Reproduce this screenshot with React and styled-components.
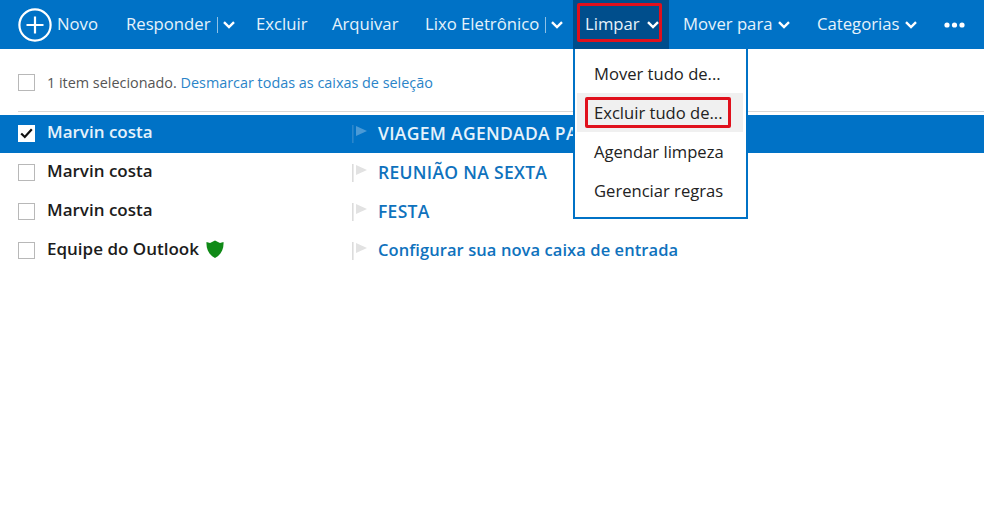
import React from 'react';
import styled, { createGlobalStyle } from 'styled-components';

const blue = '#0072c6';
const font = '"Open Sans", "Noto Sans", sans-serif';

const GlobalStyle = createGlobalStyle`
	html, body {
		margin: 0;
		padding: 0;
		background: #fff;
		overflow: hidden;
	}
	body {
		font-family: ${font};
	}
`

const Page = styled.div`
	width: 984px;
	height: 522px;
	overflow: hidden;
	background: #fff;
`

const Toolbar = styled.div`
	height: 49px;
	padding-left: 18px;
	display: flex;
	align-items: stretch;
	background: ${blue};
	color: #fff;
	font-size: 16.7px;
`

const Command = styled.div`
	position: relative;
	display: flex;
	align-items: center;
	gap: ${p => p.$gap || 0}px;
	width: ${p => p.$width}px;
	flex: none;
	padding-left: ${p => p.$pad || 0}px;
	box-sizing: border-box;
	background: ${p => p.$open ? '#004e8c' : 'transparent'};
	white-space: nowrap;
`

const Label = styled.span`
	color: #e6f2fb;
	margin-top: -2px;
`

const Divider = styled.span`
	width: 1px;
	height: 16px;
	margin: 0 5px 0 6px;
	background: #8fc1e6;
`

const Highlight = styled.div`
	position: absolute;
	left: ${p => p.$left}px;
	top: ${p => p.$top}px;
	width: ${p => p.$width}px;
	height: ${p => p.$height}px;
	box-sizing: border-box;
	border: 3px solid #e0101c;
	border-radius: 2px;
	pointer-events: none;
`

const Menu = styled.div`
	position: absolute;
	left: 0;
	top: 49px;
	width: 175px;
	height: 170px;
	box-sizing: border-box;
	padding-top: 5px;
	background: #fff;
	border: 2px solid ${blue};
	border-top: none;
	z-index: 2;
`

const MenuItem = styled.div`
	height: 39px;
	padding-left: ${p => p.$hover ? 17 : 19}px;
	margin-left: ${p => p.$hover ? 2 : 0}px;
	margin-right: 3px;
	display: flex;
	align-items: center;
	font-size: 16.6px;
	color: #222;
	background: ${p => p.$hover ? '#f0f0f0' : 'transparent'};
`

const SelectBar = styled.div`
	height: 63px;
	margin-left: 18px;
	display: flex;
	align-items: center;
	gap: 12px;
	box-sizing: border-box;
	padding-top: 5px;
	border-bottom: 1px solid #d8d8d8;
	font-size: 14.4px;
	color: #555;
`

const BarLink = styled.span`
	color: #2a84c8;
`

const Box = styled.span`
	width: 17px;
	height: 17px;
	flex: none;
	box-sizing: border-box;
	display: flex;
	align-items: center;
	justify-content: center;
	background: #fff;
	border: ${p => p.$checked ? 'none' : '1px solid #b8b8b8'};
`

const List = styled.div`
	margin-top: 3px;
`

const Row = styled.div`
	height: ${p => p.$selected ? 38 : 39}px;
	margin-bottom: ${p => p.$selected ? 1 : 0}px;
	padding: 0 0 ${p => p.$selected ? 1 : 2}px 18px;
	box-sizing: border-box;
	display: grid;
	grid-template-columns: 29px 305px 26px 1fr;
	align-items: center;
	background: ${p => p.$selected ? blue : 'transparent'};
`

const Sender = styled.div`
	display: flex;
	align-items: center;
	gap: 7px;
	font-size: 17px;
	font-weight: 600;
	margin-top: -4px;
	color: ${p => p.$selected ? '#e6f2fb' : '#1c1c1c'};
`

const Subject = styled.div`
	font-size: ${p => p.$caps ? 17.5 : 16.5}px;
	font-weight: 600;
	white-space: nowrap;
	margin-top: -2px;
	letter-spacing: ${p => p.$caps ? 0.3 : 0.08}px;
	color: ${p => p.$selected ? '#e6f2fb' : '#0f72bd'};
`

const Chevron = () => (
	<svg width="12" height="8" viewBox="0 0 12 8" fill="none" stroke="#fff" strokeWidth="2.4">
		<path d="M1 1.2 L6 6 L11 1.2" />
	</svg>
)

const PlusCircle = () => (
	<svg width="34" height="34" viewBox="0 0 34 34" fill="none" stroke="#fff" strokeWidth="2.2">
		<circle cx="17" cy="17" r="15.6" />
		<path d="M17 8.5 V25.5 M8.5 17 H25.5" />
	</svg>
)

const Dots = () => (
	<svg width="21" height="6" viewBox="0 0 21 6" fill="#fff">
		<circle cx="3" cy="3" r="2.6" />
		<circle cx="10.5" cy="3" r="2.6" />
		<circle cx="18" cy="3" r="2.6" />
	</svg>
)

const Flag = ({ selected }) => (
	<svg width="16" height="18" viewBox="0 0 16 18">
		<rect x="0" y="0" width="1.6" height="18" fill={selected ? '#2a86cc' : '#dcdcdc'} />
		<path d="M4 1 L15 6 L4 11 Z" fill={selected ? '#4b9ad6' : '#e2e2e2'} />
	</svg>
)

const Shield = () => (
	<svg width="18" height="18" viewBox="0 0 18 18">
		<path d="M0.5 2 L4 3 L9 0.5 L14 3 L17.5 2 C18 9 15 15 9 18 C3 15 0 9 0.5 2 Z" fill="#108a17" />
	</svg>
)

const Check = () => (
	<svg width="13" height="11" viewBox="0 0 13 11" fill="none" stroke="#111" strokeWidth="2.2">
		<path d="M1.2 5.5 L4.8 9 L11.8 1.2" />
	</svg>
)

const rows = [
	{ sender: 'Marvin costa', subject: 'VIAGEM AGENDADA PA', selected: true, caps: true },
	{ sender: 'Marvin costa', subject: 'REUNIÃO NA SEXTA', caps: true },
	{ sender: 'Marvin costa', subject: 'FESTA', caps: true },
	{ sender: 'Equipe do Outlook', subject: 'Configurar sua nova caixa de entrada', safe: true },
]

const menuItems = ['Mover tudo de...', 'Excluir tudo de...', 'Agendar limpeza', 'Gerenciar regras']

const App = () => {
	return (
		<Page>
			<GlobalStyle />
			<Toolbar>
				<Command $width={108} $gap={5}>
					<PlusCircle />
					<Label>Novo</Label>
				</Command>
				<Command $width={130}>
					<Label>Responder</Label>
					<Divider />
					<Chevron />
				</Command>
				<Command $width={76}><Label>Excluir</Label></Command>
				<Command $width={93}><Label>Arquivar</Label></Command>
				<Command $width={148}>
					<Label>Lixo Eletrônico</Label>
					<Divider />
					<Chevron />
				</Command>
				<Command $width={96} $pad={12} $gap={7} $open>
					<Label>Limpar</Label>
					<Chevron />
					<Highlight $left={4} $top={3} $width={85} $height={39} />
					<Menu>
						{menuItems.map((item, i) => (
							<MenuItem key={item} $hover={i === 1}>{item}</MenuItem>
						))}
						<Highlight $left={10} $top={48} $width={146} $height={31} />
					</Menu>
				</Command>
				<Command $width={148} $pad={14} $gap={6}>
					<Label>Mover para</Label>
					<Chevron />
				</Command>
				<Command $width={127} $gap={6}>
					<Label>Categorias</Label>
					<Chevron />
				</Command>
				<Command $width={30}><Dots /></Command>
			</Toolbar>
			<SelectBar>
				<Box />
				<span>1 item selecionado. <BarLink>Desmarcar todas as caixas de seleção</BarLink></span>
			</SelectBar>
			<List>
				{rows.map((row, i) => (
					<Row key={i} $selected={row.selected}>
						<Box $checked={row.selected}>{row.selected && <Check />}</Box>
						<Sender $selected={row.selected}>
							{row.sender}
							{row.safe && <Shield />}
						</Sender>
						<Flag selected={row.selected} />
						<Subject $selected={row.selected} $caps={row.caps}>{row.subject}</Subject>
					</Row>
				))}
			</List>
		</Page>
	)
}

export default App;
